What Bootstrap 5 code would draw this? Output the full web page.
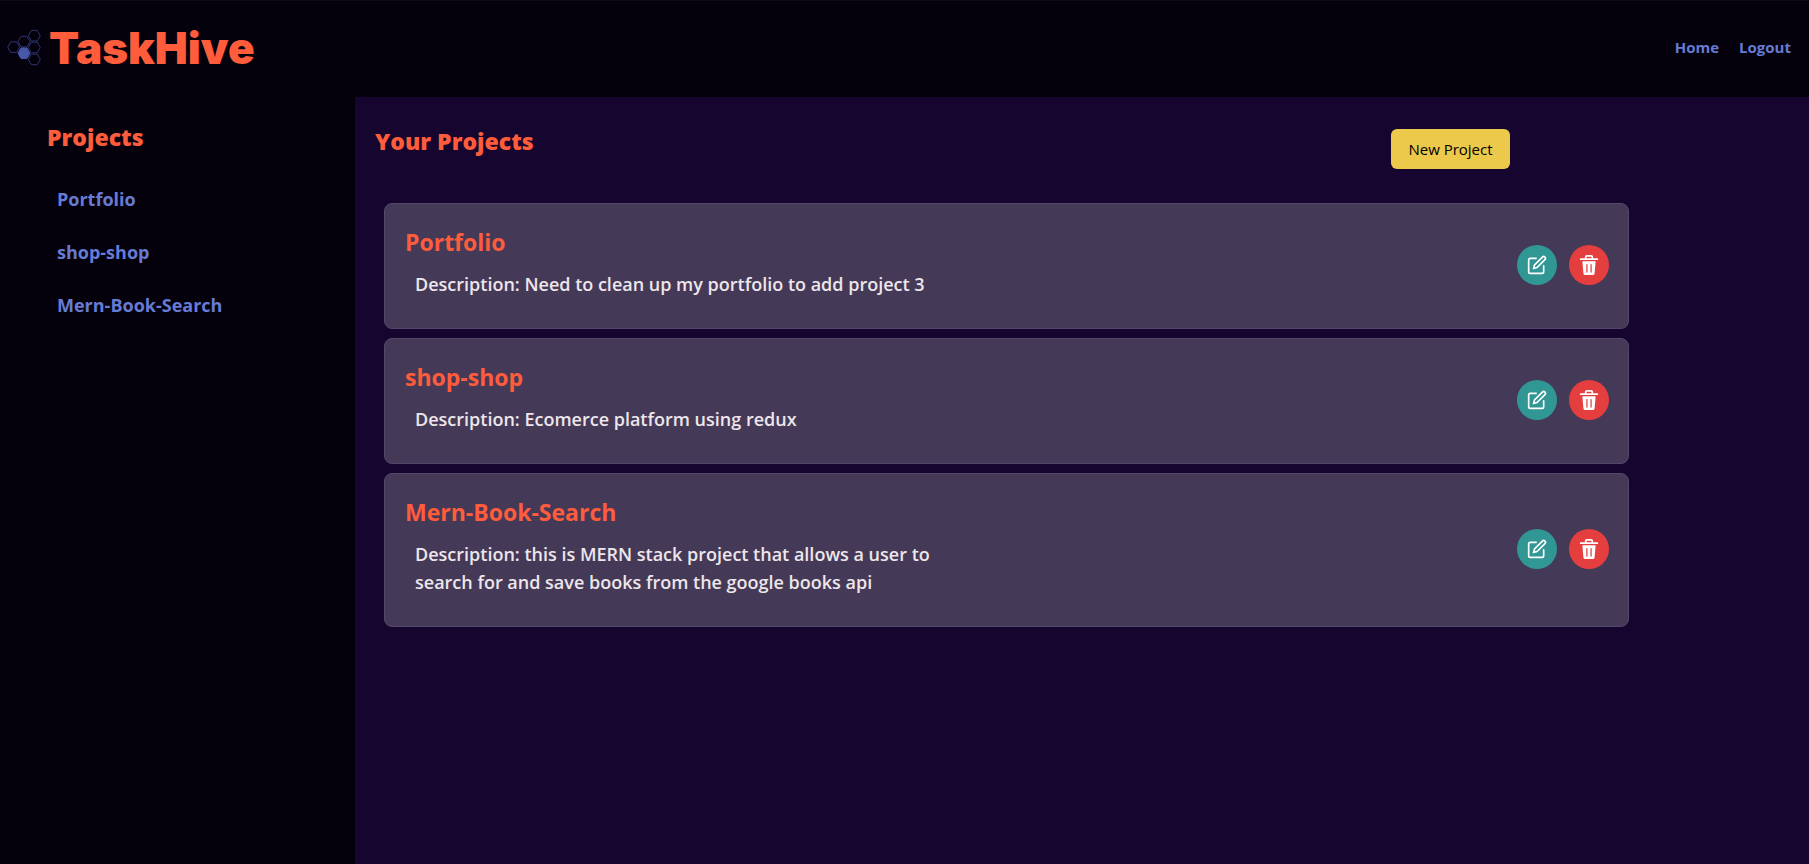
<!DOCTYPE html>
<html lang="en">
<head>
<meta charset="utf-8">
<meta name="viewport" content="width=device-width, initial-scale=1">
<title>TaskHive</title>
<link href="https://cdn.jsdelivr.net/npm/bootstrap@5.3.0/dist/css/bootstrap.min.css" rel="stylesheet">
<style>
  body { background: #05010c; color: #ede6ea; font-family: "Open Sans", "Noto Sans", sans-serif; }
  a { color: #667bd4; text-decoration: none; }
  a:hover { color: #8c9dea; }
  .site-header { height: 97px; border-top: 1px solid #0d0a17; padding: 0 18px 2px 7px; }
  .brand { color: #ff5c3c; font: 900 44px/60px Inter, sans-serif; gap: 8px; }
  .brand:hover { color: #ff5c3c; }
  .site-nav { gap: 20px; font-size: 15px; font-weight: 700; line-height: 24px; padding-bottom: 2px; }
  .side { width: 355px; padding: 23px 47px; }
  .section-title { color: #ff5c3c; font-size: 23px; font-weight: 800; line-height: 34px; margin: 0; }
  .side-links { margin-top: 32px; padding-left: 10px; gap: 26px; font-size: 18px; font-weight: 700; line-height: 27px; }
  .main { background: #16052e; padding: 27px 180px 27px 20px; }
  .main-head { padding-right: 119px; }
  .btn-new { background: #ecc94b; color: #000; font-size: 15px; line-height: 24px; padding: 8px 0; border: 0; border-radius: 6px; margin-top: 5px; width: 119px; white-space: nowrap; }
  .btn-new:hover { background: #d9b73e; }
  .projects { margin-top: 34px; padding-left: 9px; gap: 9px; }
  .project { background: #453958; border: 1px solid #54486a; border-radius: 8px; padding: 20px 19px 30px 20px; color: inherit; }
  .project h2 { color: #ff5c3c; font-size: 23px; font-weight: 700; line-height: 36px; margin: 0 0 10px; }
  .project p { font-size: 18px; font-weight: 600; line-height: 28px; margin: 0; padding-left: 10px; }
  .project-text { width: 45%; }
  .project-actions { gap: 12px; margin-bottom: -8px; }
  .round-btn { width: 40px; height: 40px; border: 0; border-radius: 50%; color: #fff; padding: 0; }
  .round-btn svg { display: block; margin: auto; }
  .edit-btn { background: #319795; }
  .delete-btn { background: #e53e3e; }
</style>
</head>
<body class="d-flex flex-column min-vh-100">
<svg class="d-none" aria-hidden="true">
  <symbol id="icon-edit" viewBox="0 0 24 24"><g fill="none" stroke="currentColor" stroke-linecap="round" stroke-width="2"><path d="M11 4H4a2 2 0 0 0-2 2v14a2 2 0 0 0 2 2h14a2 2 0 0 0 2-2v-7"/><path d="M18.5 2.5a2.121 2.121 0 0 1 3 3L12 15l-4 1 1-4 9.5-9.5z"/></g></symbol>
  <symbol id="icon-delete" viewBox="0 0 24 24"><path fill="currentColor" d="M19.452 7.5H4.547a.5.5 0 00-.5.545l1.287 14.136A2 2 0 007.326 24h9.347a2 2 0 001.992-1.819L19.95 8.045a.5.5 0 00-.129-.382.5.5 0 00-.369-.163zm-9.2 13a.75.75 0 01-1.5 0v-9a.75.75 0 011.5 0zm5 0a.75.75 0 01-1.5 0v-9a.75.75 0 011.5 0zM22 4h-4.75a.25.25 0 01-.25-.25V2.5A2.5 2.5 0 0014.5 0h-5A2.5 2.5 0 007 2.5v1.25a.25.25 0 01-.25.25H2a1 1 0 000 2h20a1 1 0 000-2zM9 3.75V2.5a.5.5 0 01.5-.5h5a.5.5 0 01.5.5v1.25a.25.25 0 01-.25.25h-5.5A.25.25 0 019 3.75z"/></symbol>
  <symbol id="hex" viewBox="-7 -7 14 14"><path d="M-6 0L-3 -5.3H3L6 0L3 5.3H-3Z"/></symbol>
</svg>
<header class="site-header d-flex align-items-center justify-content-between flex-shrink-0">
  <a class="brand d-flex align-items-center" href="#">
    <svg width="34" height="38" viewBox="7 29 34 38" fill="none" stroke="#2d3470" aria-hidden="true">
      <use href="#hex" x="27.3" y="28.7" width="14" height="14"/>
      <use href="#hex" x="17" y="34.6" width="14" height="14"/>
      <use href="#hex" x="6.7" y="40.1" width="14" height="14"/>
      <use href="#hex" x="27.3" y="40.5" width="14" height="14"/>
      <use href="#hex" x="27.3" y="52.4" width="14" height="14"/>
      <use href="#hex" x="17" y="46.3" width="14" height="14" fill="#4957a8" stroke="#4957a8"/>
    </svg>
    <span>TaskHive</span>
  </a>
  <nav class="site-nav d-flex"><a href="#">Home</a><a href="#">Logout</a></nav>
</header>
<div class="d-flex flex-grow-1">
  <aside class="side flex-shrink-0">
    <h2 class="section-title">Projects</h2>
    <nav class="side-links d-flex flex-column"><a href="#">Portfolio</a><a href="#">shop-shop</a><a href="#">Mern-Book-Search</a></nav>
  </aside>
  <main class="main flex-grow-1">
    <div class="main-head d-flex justify-content-between align-items-start">
      <h1 class="section-title">Your Projects</h1>
      <button type="button" class="btn btn-new">New Project</button>
    </div>
    <div class="projects d-flex flex-column">
      <article class="project d-flex flex-row justify-content-between">
        <div class="project-text"><h2>Portfolio</h2><p>Description: Need to clean up my portfolio to add project 3</p></div>
        <div class="d-flex align-items-center project-actions">
          <button type="button" class="round-btn edit-btn" aria-label="Edit"><svg width="20" height="20"><use href="#icon-edit"/></svg></button>
          <button type="button" class="round-btn delete-btn" aria-label="Delete"><svg width="20" height="20"><use href="#icon-delete"/></svg></button>
        </div>
      </article>
      <article class="project d-flex flex-row justify-content-between">
        <div class="project-text"><h2>shop-shop</h2><p>Description: Ecomerce platform using redux</p></div>
        <div class="d-flex align-items-center project-actions">
          <button type="button" class="round-btn edit-btn" aria-label="Edit"><svg width="20" height="20"><use href="#icon-edit"/></svg></button>
          <button type="button" class="round-btn delete-btn" aria-label="Delete"><svg width="20" height="20"><use href="#icon-delete"/></svg></button>
        </div>
      </article>
      <article class="project d-flex flex-row justify-content-between">
        <div class="project-text"><h2>Mern-Book-Search</h2><p>Description: this is MERN stack project that allows a user to search for and save books from the google books api</p></div>
        <div class="d-flex align-items-center project-actions">
          <button type="button" class="round-btn edit-btn" aria-label="Edit"><svg width="20" height="20"><use href="#icon-edit"/></svg></button>
          <button type="button" class="round-btn delete-btn" aria-label="Delete"><svg width="20" height="20"><use href="#icon-delete"/></svg></button>
        </div>
      </article>
    </div>
  </main>
</div>
<script src="https://cdn.jsdelivr.net/npm/bootstrap@5.3.0/dist/js/bootstrap.bundle.min.js"></script>
</body>
</html>
